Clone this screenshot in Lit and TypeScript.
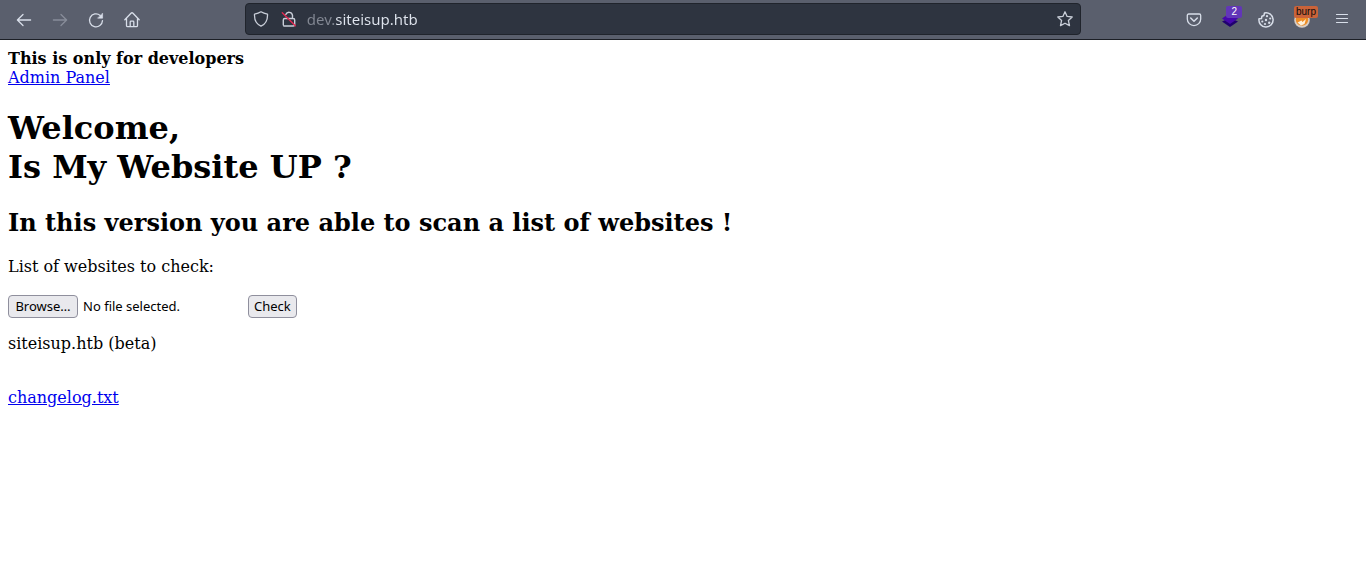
import { LitElement, html, css, svg } from "lit";
import { customElement, property, state } from "lit/decorators.js";

@customElement("browser-toolbar")
class BrowserToolbar extends LitElement {
  @property() address = "";

  static styles = css`
    :host {
      display: block;
      font-family: "Noto Sans", sans-serif;
    }
    .bar {
      display: flex;
      align-items: center;
      height: 39px;
      padding: 0 6px;
      background: #5a5f6d;
      border-bottom: 1px solid #1c1f26;
    }
    .group {
      display: flex;
    }
    .spacer {
      flex: 5;
    }
    .tool {
      position: relative;
      display: flex;
      align-items: center;
      justify-content: center;
      width: 36px;
      height: 36px;
      padding: 0;
      border: 0;
      background: none;
      color: #d8dee9;
    }
    .tool:disabled {
      color: #888d9a;
    }
    .menu {
      margin-left: 4px;
    }
    svg {
      display: block;
      width: 16px;
      height: 16px;
      fill: none;
      stroke: currentColor;
      stroke-width: 1.3;
      stroke-linecap: round;
      stroke-linejoin: round;
      overflow: visible;
    }
    .url {
      flex: 44;
      display: flex;
      align-items: center;
      box-sizing: border-box;
      height: 32px;
      margin-bottom: 1px;
      border: 1px solid #20242c;
      border-radius: 4px;
      background: #2e3440;
    }
    .url .tool {
      width: 28px;
      height: 28px;
      color: #c9ced8;
    }
    .url .tool:first-child {
      margin-left: 1px;
    }
    .url .tool:last-child {
      margin-right: 1px;
    }
    .address {
      flex: 1;
      min-width: 0;
      height: 28px;
      padding: 0;
      margin-left: 4px;
      border: 0;
      outline: 0;
      font: 15px "Noto Sans", sans-serif;
      color: transparent;
      caret-color: #d8dee9;
      background: linear-gradient(to right, #838893 28px, #e0e5ee 28px);
      -webkit-background-clip: text;
      background-clip: text;
    }
    .badge {
      position: absolute;
      top: 4px;
      right: 6px;
      padding: 0 5px;
      border-radius: 2px;
      background: #6236b8;
      color: #fff;
      font-size: 10px;
      line-height: 12px;
    }
    .orange {
      right: 2px;
      padding: 0 2px;
      background: #ca6339;
      color: #0c0c0d;
    }
  `;

  render() {
    return html`
      <nav class="bar" aria-label="Browser">
        <div class="group">
          <button class="tool" aria-label="Back">
            ${this.icon(svg`<path d="M14.6 8H1.6M7 2.5 1.4 8 7 13.5"/>`)}
          </button>
          <button class="tool" aria-label="Forward" disabled>
            ${this.icon(svg`<path d="M1.4 8h13M9 2.5 14.6 8 9 13.5"/>`)}
          </button>
          <button class="tool" aria-label="Reload">
            ${this.icon(svg`<path d="M12.2 3.4A6.5 6.5 0 1 0 14.5 8.6"/><path d="M14.6 1.5v4.7H9.9z" fill="currentColor" stroke-width=".6"/>`)}
          </button>
          <button class="tool" aria-label="Home">
            ${this.icon(svg`<path d="M.8 7.800 7 1.200q1-1 2 0l6.200 6.600M2.500 6.400v7q0 1.200 1.200 1.200h8.600q1.200 0 1.200-1.200v-7M6.200 14.300V10q0-.8.8-.8h2q.8 0 .8.8v4.300"/>`)}
          </button>
        </div>
        <div class="spacer"></div>
        <div class="url">
          <button class="tool" aria-label="Tracking protection">
            ${this.icon(svg`<path d="M8 .8C6.200 2 4.100 2.700 1.500 3.100 1.200 8.600 3.300 13 8 15.200 12.700 13 14.800 8.600 14.500 3.100 11.900 2.700 9.800 2 8 .8z"/>`)}
          </button>
          <button class="tool" aria-label="Connection is not secure">
            ${this.icon(svg`<path d="M4.800 3.500a3.500 3.500 0 0 1 6.700.8v3.200M2.300 14V9q0-1.500 1.500-1.500h8.400q1.500 0 1.500 1.500v4.500q0 1.500-1.500 1.500H2.800" stroke-width="1.400"/><path d="m1.300 1.800 13 13" stroke="#e22850" stroke-width="1.400"/>`)}
          </button>
          <input class="address" type="text" aria-label="Address" spellcheck="false" .value=${this.address} />
          <button class="tool" aria-label="Bookmark this page">
            ${this.icon(svg`<path d="m8 .8 2.100 4.600 5.100.6-3.800 3.500 1.100 5.100L8 12.200l-4.500 2.400 1.100-5.100L.8 6l5.100-.6z"/>`)}
          </button>
        </div>
        <div class="spacer"></div>
        <div class="group">
          <button class="tool" aria-label="Save to Pocket">
            ${this.icon(svg`<path d="M2.700 2h10.600q1.400 0 1.400 1.400v3.500a6.700 6.700 0 0 1-13.400 0V3.400q0-1.400 1.400-1.400z"/><path d="m4.700 6 3.300 3.200L11.300 6" stroke-width="1.500"/>`)}
          </button>
          <button class="tool" aria-label="Wappalyzer">
            ${this.icon(svg`<g stroke="none"><path d="M0 9.500 8 6l8 3.500-8 5.500z" fill="#20006f"/><path d="M0 6.500 8 1l8 5.500L8 12z" fill="#4608ad"/></g>`)}
            <span class="badge">2</span>
          </button>
          <button class="tool" aria-label="Cookie editor">
            ${this.icon(svg`<path d="M6.500 1A7.100 7.100 0 1 1 1 6.800l2.500-.3.400-2.300 2-.7z" stroke-width="1.500"/><g fill="currentColor" stroke="none"><circle cx="9" cy="4.200" r="1.100"/><circle cx="12.200" cy="6.500" r="1.100"/><circle cx="8" cy="8" r="1.200"/><circle cx="4.300" cy="9.500" r="1.100"/><circle cx="7" cy="12" r="1.100"/><circle cx="11.200" cy="10.800" r="1.200"/></g>`)}
          </button>
          <button class="tool" aria-label="FoxyProxy">
            ${this.icon(svg`<g stroke="none"><circle cx="8" cy="8" r="7.800" fill="#d8cdc4"/><circle cx="8" cy="7.500" r="6.200" fill="#ed8c25"/><path d="m3.500 10.500 4-2 1 1.500 3.500-3-1.500 5-3.500 1.500z" fill="#fff0d8"/></g>`)}
            <span class="badge orange">burp</span>
          </button>
          <button class="tool menu" aria-label="Open menu">
            ${this.icon(svg`<path d="M2.500 2.500h11M2.500 6.500h11M2.500 10.500h11" stroke-width="1.200"/>`)}
          </button>
        </div>
      </nav>
    `;
  }

  private icon(shape: unknown) {
    return html`<svg viewBox="0 0 16 16" aria-hidden="true">${shape}</svg>`;
  }
}

@customElement("app-root")
class AppRoot extends LitElement {
  @state() private fileName = "No file selected.";

  static styles = css`
    :host {
      display: block;
      min-height: 100vh;
      background: #fff;
      color: #000;
      font: 16px/19px "DejaVu Serif", serif;
    }
    main {
      padding: 9px 8px;
    }
    a {
      color: #0000ee;
    }
    h1 {
      margin: 22px 0 20px;
      font-size: 32px;
      line-height: 39px;
    }
    h2 {
      margin: 20px 0 19px;
      font-size: 24px;
      line-height: 31px;
    }
    .form {
      display: flex;
      align-items: center;
      margin: 19px 0 16px;
      font: 13px/17px "Noto Sans", sans-serif;
    }
    .picker {
      position: relative;
      display: flex;
      align-items: center;
      gap: 5px;
      width: 240px;
    }
    .file {
      position: absolute;
      inset: 0;
      width: 100%;
      opacity: 0;
    }
    .button {
      box-sizing: border-box;
      padding: 2px 5px;
      border: 1px solid #8f8f9d;
      border-radius: 4px;
      background: #e9e9ed;
      color: #000;
      font: inherit;
    }
    .picker .button {
      min-width: 70px;
      text-align: center;
    }
    .changes {
      margin-top: 35px;
    }
    p {
      margin: 0;
    }
  `;

  private pick(event: Event) {
    const files = (event.target as HTMLInputElement).files;
    this.fileName = files?.[0]?.name ?? "No file selected.";
  }

  render() {
    return html`
      <browser-toolbar address="dev.siteisup.htb"></browser-toolbar>
      <main>
        <div><b>This is only for developers</b></div>
        <div><a href="#admin">Admin Panel</a></div>
        <h1>Welcome,<br />Is My Website UP ?</h1>
        <h2>In this version you are able to scan a list of websites !</h2>
        <p>List of websites to check:</p>
        <form class="form" @submit=${(e: Event) => e.preventDefault()}>
          <label class="picker">
            <span class="button">Browse…</span>
            <span>${this.fileName}</span>
            <input class="file" type="file" @change=${this.pick} />
          </label>
          <button class="button" type="submit">Check</button>
        </form>
        <p>siteisup.htb (beta)</p>
        <p class="changes"><a href="#changelog">changelog.txt</a></p>
      </main>
    `;
  }
}
